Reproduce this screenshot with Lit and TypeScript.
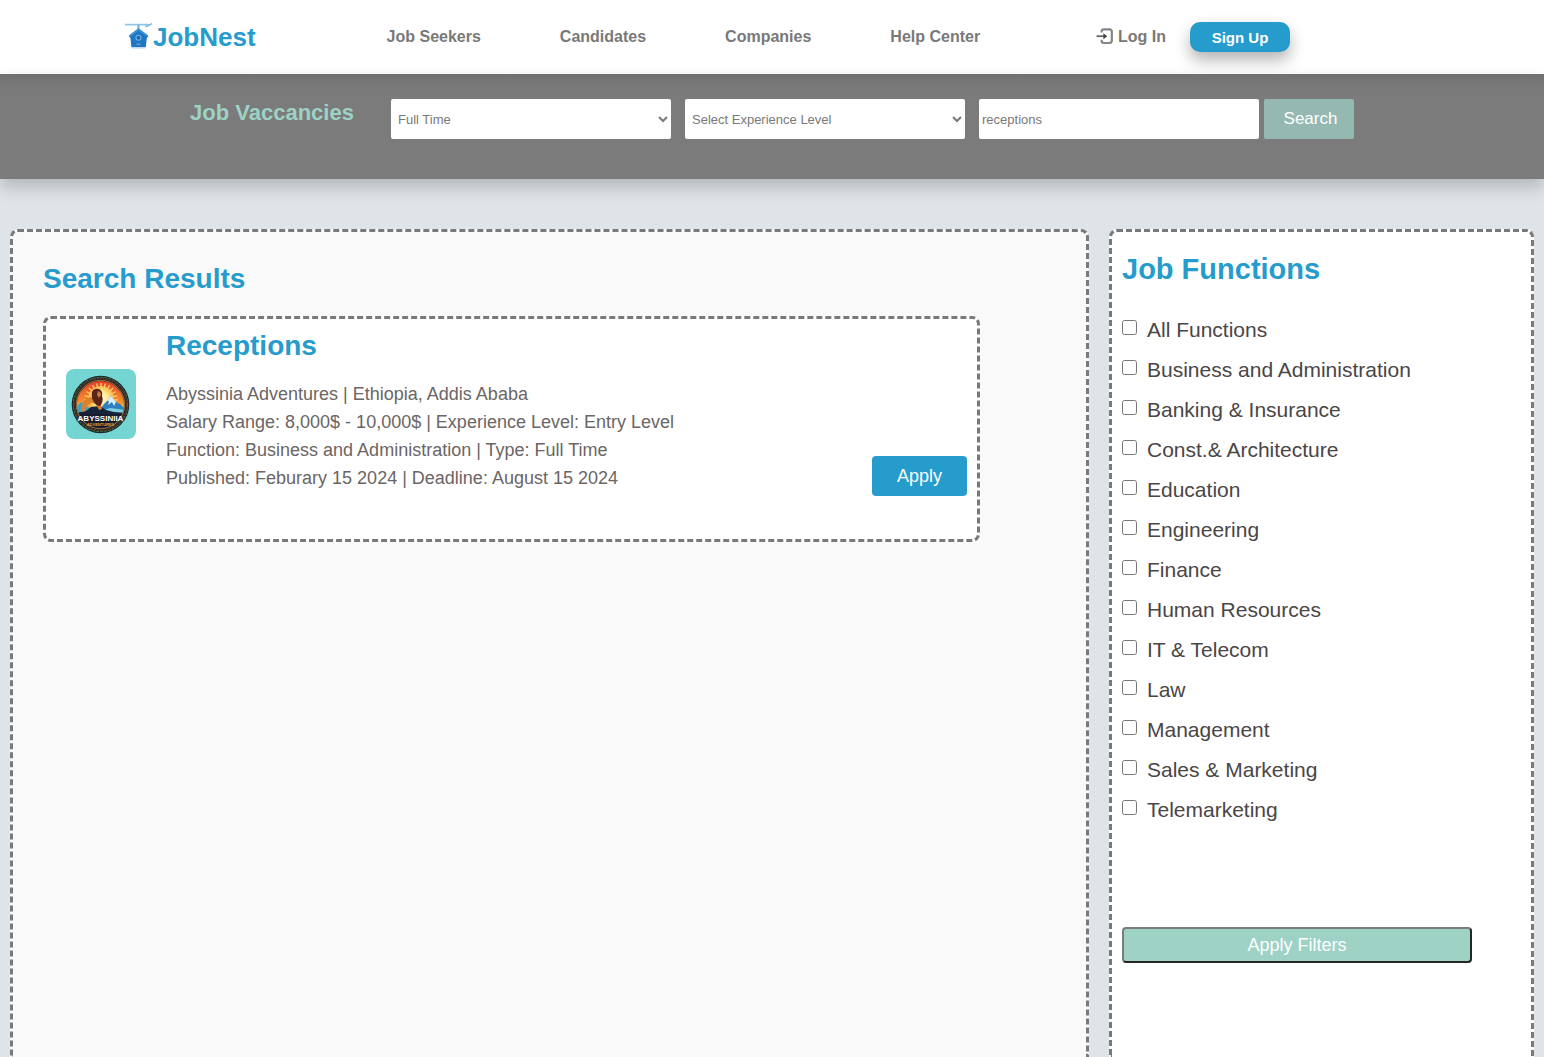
import { LitElement, html, css, svg } from "lit";
import { customElement, state } from "lit/decorators.js";

const NAV = ["Job Seekers", "Candidates", "Companies", "Help Center"];

const FUNCTIONS = [
  "All Functions",
  "Business and Administration",
  "Banking & Insurance",
  "Const.& Architecture",
  "Education",
  "Engineering",
  "Finance",
  "Human Resources",
  "IT & Telecom",
  "Law",
  "Management",
  "Sales & Marketing",
  "Telemarketing",
];

interface Job {
  title: string;
  lines: string[];
}

const JOBS: Job[] = [
  {
    title: "Receptions",
    lines: [
      "Abyssinia Adventures | Ethiopia, Addis Ababa",
      "Salary Range: 8,000$ - 10,000$ | Experience Level: Entry Level",
      "Function: Business and Administration | Type: Full Time",
      "Published: Feburary 15 2024 | Deadline: August 15 2024",
    ],
  },
];

const birdhouse = html`<svg class="brand-icon" viewBox="0 0 28 28" aria-hidden="true">
  <path d="M0 1.6H24" stroke="#8fc3e8" stroke-width="1.6" />
  <path d="M20 3.6L22.5 3L27 0.6" stroke="#7fb9e4" stroke-width="1.5" fill="none" />
  <path d="M13.5 2V8" stroke="#6aa9da" stroke-width="2" />
  <path d="M13.5 5.4L23.4 13L21.8 15L20.8 24.2H6.4L5.4 15L3.8 13Z" fill="#1f76c2" />
  <path d="M4.5 13L13.5 6.4L22.5 13" stroke="#3c92d6" stroke-width="1.8" fill="none" />
  <circle cx="13.5" cy="14.8" r="2.5" fill="#1766b4" stroke="#74b3e3" stroke-width="1.1" />
  <path d="M11.5 21.2H15.5" stroke="#5aa2dc" stroke-width="1.4" />
  <path d="M7 25H20" stroke="#b9daf2" stroke-width="1.2" />
</svg>`;

const loginIcon = html`<svg class="login-icon" viewBox="0 0 18 18" fill="none" stroke="#858585" aria-hidden="true">
  <path d="M5.6 4.4V3.6Q5.6 1.4 7.8 1.4H13.4Q15.8 1.4 15.8 3.8V12.6Q15.8 15 13.4 15H7.8Q5.6 15 5.6 12.8V11.8" stroke-width="2.2" />
  <path d="M0.5 8.2H9" stroke-width="1.8" stroke="#666" />
  <path d="M7.4 5.2L11.2 8.2L7.4 11.2Z" fill="#444" stroke="none" />
</svg>`;

const rays = Array.from({ length: 13 }, (_, i) => {
  const a = Math.PI + (Math.PI * i) / 12;
  return svg`<line x1=${35 + 12 * Math.cos(a)} y1=${31 + 12 * Math.sin(a)}
    x2=${35 + 17 * Math.cos(a)} y2=${31 + 17 * Math.sin(a)} stroke="#ffd069" stroke-width="1.3" />`;
});

const companyLogo = html`<svg class="logo" viewBox="0 0 70 70" role="img" aria-label="Abyssinia Adventures">
  <defs>
    <linearGradient id="sky" x1="0" y1="0" x2="0" y2="1">
      <stop offset="0" stop-color="#e23c2b" />
      <stop offset="0.4" stop-color="#f7892c" />
      <stop offset="0.65" stop-color="#ffc65a" />
    </linearGradient>
    <radialGradient id="sun">
      <stop offset="0" stop-color="#fffbe0" />
      <stop offset="0.6" stop-color="#ffe791" />
      <stop offset="1" stop-color="#fbb040" />
    </radialGradient>
    <clipPath id="disc"><circle cx="34.5" cy="35.5" r="23.5" /></clipPath>
  </defs>
  <rect width="70" height="70" fill="#75d5d2" />
  <circle cx="34.5" cy="35.5" r="28.8" fill="#20242c" />
  <circle cx="34.5" cy="35.5" r="27.2" fill="none" stroke="#3f7a40" stroke-width="1" stroke-dasharray="3 1" />
  <circle cx="34.5" cy="35.5" r="25.8" fill="none" stroke="#8c3a2a" stroke-width="1" stroke-dasharray="2 1" />
  <circle cx="34.5" cy="35.5" r="24.2" fill="none" stroke="#a88a3c" stroke-width="0.8" />
  <g clip-path="url(#disc)">
    <rect x="10" y="11" width="50" height="50" fill="url(#sky)" />
    <circle cx="35" cy="30" r="13" fill="url(#sun)" />
    ${rays}
    <path d="M10 38L15 33L20 37L26 40V48H10Z" fill="#3f9fc4" />
    <path d="M33 42L38 35L41 32L45 27L50 33L54 35L60 41V48H33Z" fill="#2f7fc0" />
    <path d="M45 27L41 32L43 32L42 36L46 33L48 37L50 33Z" fill="#d8f0f8" />
    <path d="M35 42L44 39L60 41V48H35Z" fill="#7ed0dd" />
    <path d="M10 44L20 42L25 38L34 37L40 41L48 43L60 44V62H10Z" fill="#17233b" />
    <path d="M15 42L17 33Q19 29 25 28L33 28L36 40L33 41L30 35L25 34L21 37L18 43Z" fill="#d9822b" />
    <path d="M26 23Q28 19 33 20Q37 22 36 27Q38 32 34 37Q30 37 28 33Q25 29 26 23Z" fill="#5b2417" />
    <path d="M32 22Q35 23 35 26L33 29L31 26Z" fill="#c07c3c" />
    <path d="M10 45H60V62H10Z" fill="#171c2c" />
  </g>
  <text x="34.5" y="52" text-anchor="middle" class="logo-name">ABYSSINIIA</text>
  <text x="34.5" y="57" text-anchor="middle" class="logo-sub">ADVENTURES</text>
</svg>`;

@customElement("app-root")
export class AppRoot extends LitElement {
  @state() private query = "receptions";

  static styles = css`
    :host {
      display: block;
      min-height: 100vh;
      background: #dfe4e8;
      color: #797979;
      font-family: "Liberation Sans", Arial, sans-serif;
      font-size: 16px;
    }
    * {
      box-sizing: border-box;
    }
    h1, h2, p, ul {
      margin: 0;
      padding: 0;
    }
    a {
      color: inherit;
      text-decoration: none;
    }
    button, input, select {
      font-family: inherit;
    }
    .page {
      display: flex;
      flex-direction: column;
      min-height: 100vh;
    }
    .topbar {
      display: flex;
      align-items: center;
      height: 74px;
      padding: 0 125px;
      background: #fff;
      font-weight: 700;
    }
    .brand {
      display: flex;
      align-items: center;
      color: #269ccd;
      font-size: 26px;
    }
    .brand-icon {
      width: 28px;
      height: 28px;
    }
    .nav {
      display: flex;
      gap: 79px;
      margin-left: 131px;
    }
    .account {
      display: flex;
      align-items: center;
      gap: 24px;
      margin-left: auto;
      margin-right: 129px;
    }
    .login {
      display: flex;
      align-items: center;
      gap: 4px;
    }
    .login-icon {
      width: 18px;
      height: 18px;
    }
    .signup {
      width: 100px;
      height: 30px;
      border: 0;
      border-radius: 10px;
      background: #269ccd;
      color: #fff;
      font-size: 15px;
      font-weight: 700;
      box-shadow: 0 8px 16px rgba(0, 0, 0, 0.3);
    }
    .searchbar {
      display: flex;
      align-items: flex-start;
      height: 105px;
      padding: 25px 190px 0;
      background: linear-gradient(#707070, #7b7b7b 16px);
      box-shadow: 0 8px 16px rgba(0, 0, 0, 0.2);
    }
    .searchbar-title {
      width: 201px;
      color: #9dd2c5;
      font-size: 22px;
      line-height: 28px;
      white-space: nowrap;
    }
    .fields {
      display: flex;
      gap: 14px;
    }
    .field {
      width: 280px;
      height: 40px;
      padding: 0 3px;
      border: 0;
      border-radius: 2px;
      background: #fff;
      color: #797979;
      font-size: 13px;
    }
    .search {
      width: 90px;
      height: 40px;
      margin-left: 5px;
      padding: 0 0 0 3px;
      border: 0;
      border-radius: 2px;
      background: #95b9b0;
      color: #fff;
      font-size: 17px;
    }
    .content {
      display: grid;
      grid-template-columns: minmax(0, 1079fr) minmax(0, 425fr);
      gap: 20px;
      flex: 1;
      padding: 50px 10px 0;
    }
    .panel {
      border: 3px dashed #797979;
      border-bottom: 0;
      border-radius: 8px 8px 0 0;
    }
    .results {
      padding: 30px;
      background: #f9f9f9;
    }
    .heading {
      color: #269ccd;
      font-size: 28px;
      line-height: 34px;
    }
    .job {
      display: flex;
      width: calc(100% - 76px);
      height: 226px;
      margin-top: 20px;
      padding: 10px 10px 10px 20px;
      border: 3px dashed #797979;
      border-radius: 8px;
      background: #fff;
    }
    .logo {
      flex: none;
      width: 70px;
      height: 70px;
      margin-top: 40px;
      border-radius: 8px;
    }
    .logo-name {
      fill: #fff;
      font-size: 8px;
      font-weight: 700;
    }
    .logo-sub {
      fill: #d9a23c;
      font-size: 4px;
      font-weight: 700;
    }
    .job-body {
      flex: 1;
      margin-left: 30px;
      font-size: 18px;
      line-height: 28px;
      color: #6b6565;
    }
    .job-lines {
      margin-top: 17px;
    }
    .apply {
      align-self: flex-end;
      width: 95px;
      height: 40px;
      margin-bottom: 33px;
      border: 0;
      border-radius: 4px;
      background: #269ccd;
      color: #fff;
      font-size: 18px;
    }
    .filters {
      padding: 20px 10px;
      background: #fff;
    }
    .filters .heading {
      font-size: 29px;
    }
    .function-list {
      margin-top: 24px;
      list-style: none;
    }
    .function {
      display: flex;
      align-items: flex-start;
      gap: 10px;
      height: 40px;
      color: #4a4646;
      font-size: 21px;
      line-height: 40px;
    }
    .function input {
      width: 15px;
      height: 15px;
      margin: 10px 0 0;
    }
    .apply-filters {
      width: 350px;
      max-width: 100%;
      height: 36px;
      margin-top: 97px;
      border: 2px solid;
      border-color: #7b7b7b #262626 #262626 #7b7b7b;
      border-radius: 4px;
      background: #9dd2c5;
      color: #fff;
      font-size: 18px;
    }
  `;

  render() {
    return html`
      <div class="page">
        <header class="topbar">
          <a class="brand" href="#">${birdhouse}JobNest</a>
          <nav class="nav">${NAV.map((n) => html`<a href="#">${n}</a>`)}</nav>
          <div class="account">
            <a class="login" href="#">${loginIcon}Log In</a>
            <button class="signup">Sign Up</button>
          </div>
        </header>
        <form class="searchbar" @submit=${(e: Event) => e.preventDefault()}>
          <h1 class="searchbar-title">Job Vaccancies</h1>
          <div class="fields">
            <select class="field" aria-label="Job type">
              <option>Full Time</option>
            </select>
            <select class="field" aria-label="Experience level">
              <option>Select Experience Level</option>
            </select>
            <input
              class="field"
              type="text"
              aria-label="Keyword"
              .value=${this.query}
              @input=${(e: Event) => (this.query = (e.target as HTMLInputElement).value)}
            />
          </div>
          <button class="search">Search</button>
        </form>
        <main class="content">
          <section class="panel results">
            <h2 class="heading">Search Results</h2>
            ${JOBS.map(
              (job) => html`<article class="job">
                ${companyLogo}
                <div class="job-body">
                  <h2 class="heading">${job.title}</h2>
                  <div class="job-lines">${job.lines.map((l) => html`<p>${l}</p>`)}</div>
                </div>
                <button class="apply">Apply</button>
              </article>`
            )}
          </section>
          <aside class="panel filters">
            <h2 class="heading">Job Functions</h2>
            <ul class="function-list">
              ${FUNCTIONS.map(
                (f) => html`<li><label class="function"><input type="checkbox" />${f}</label></li>`
              )}
            </ul>
            <button class="apply-filters">Apply Filters</button>
          </aside>
        </main>
      </div>
    `;
  }
}
